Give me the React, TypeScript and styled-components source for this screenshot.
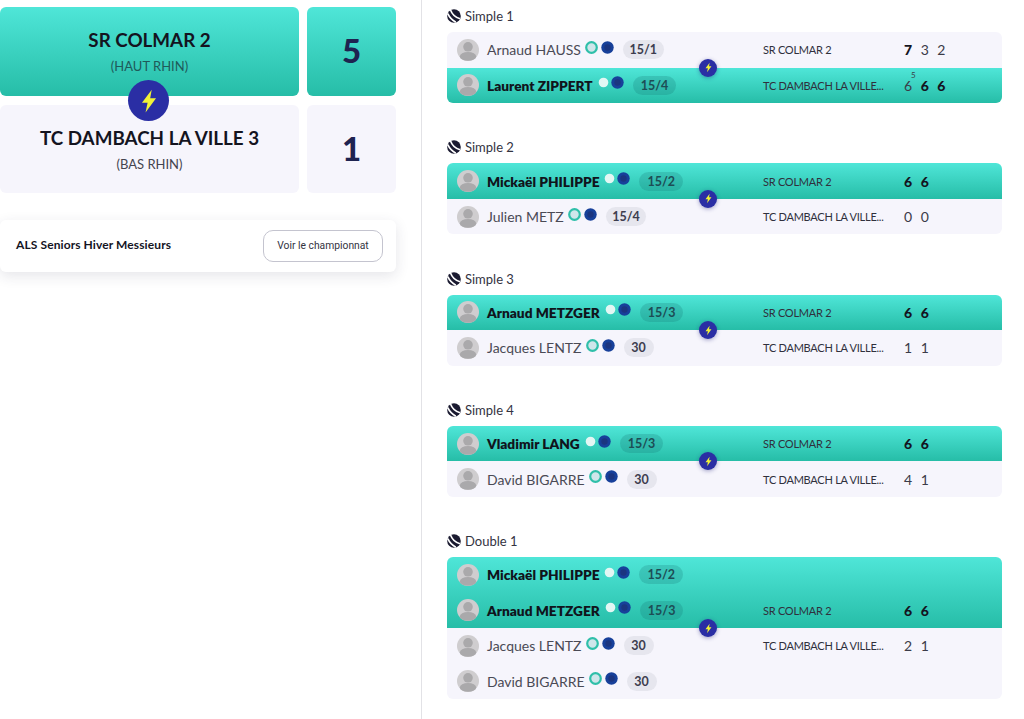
import React from "react";
import styled, { createGlobalStyle } from "styled-components";

const FONT = `Lato, "Open Sans", sans-serif`;
const TEAL = "linear-gradient(180deg, #4fe6d8 0%, #26bda7 100%)";
const LILAC = "#f6f5fc";

const GlobalStyle = createGlobalStyle`
  html, body { margin: 0; padding: 0; background: #fff; overflow: hidden; }
  body { font-family: ${FONT}; color: #1b1b2b; }
  * { box-sizing: border-box; }
`;

const Bolt = ({ size }: { size: number }) => (
  <svg width={size} height={size} viewBox="0 0 24 24">
    <path d="M14.5 1.5 5.5 13.5h5.2L8.8 22.5l9.700-13h-5.400z" fill="#f1f238" />
  </svg>
);

const BallIcon = () => (
  <svg width="14" height="14" viewBox="0 0 14 14">
    <circle cx="7" cy="7" r="6.800" fill="#1a1a30" />
    <path d="M3.400 0.800C4.800 4.600 8 8.400 13 9.800M0.800 4.600C2.400 8.200 5 11 8.800 13.200" fill="none" stroke="#fff" strokeWidth="1.700" />
  </svg>
);

const Avatar = () => (
  <svg width="22" height="22" viewBox="0 0 22 22">
    <circle cx="11" cy="11" r="11" fill="#cfcdcf" />
    <circle cx="11" cy="7.800" r="4.800" fill="#aaa9ab" />
    <ellipse cx="11" cy="17.400" rx="8.200" ry="4.400" fill="#aaa9ab" />
  </svg>
);

const GreenDot = ({ won }: { won: boolean }) => (
  <svg width="13" height="13" viewBox="0 0 13 13">
    {!won && <circle cx="6.500" cy="6.500" r="5.300" fill="#cfe6ea" stroke="#2fbfa9" strokeWidth="2.200" />}
    {won && <circle cx="6.500" cy="6.500" r="4.800" fill="#e3f7f4" />}
  </svg>
);

const BlueDot = () => (
  <svg width="13" height="13" viewBox="0 0 13 13">
    <circle cx="6.500" cy="6.500" r="6.200" fill="#17409a" />
    <circle cx="6.500" cy="6.500" r="3.200" fill="#1b3580" />
  </svg>
);

type Player = { name: string; rank: string };
type Side = { players: Player[]; team: string; sets: { v: number; bold?: boolean; tie?: number }[]; won: boolean };
type Match = { title: string; sides: Side[] };

const COLMAR = "SR COLMAR 2";
const DAMBACH = "TC DAMBACH LA VILLE...";

const s = (...vals: number[]) => vals.map((v) => ({ v }));
const b = (...vals: number[]) => vals.map((v) => ({ v, bold: true }));

const matches: Match[] = [
  {
    title: "Simple 1",
    sides: [
      { players: [{ name: "Arnaud HAUSS", rank: "15/1" }], team: COLMAR, won: false, sets: [{ v: 7, bold: true }, { v: 3 }, { v: 2 }] },
      { players: [{ name: "Laurent ZIPPERT", rank: "15/4" }], team: DAMBACH, won: true, sets: [{ v: 6, tie: 5 }, { v: 6, bold: true }, { v: 6, bold: true }] },
    ],
  },
  {
    title: "Simple 2",
    sides: [
      { players: [{ name: "Mickaël PHILIPPE", rank: "15/2" }], team: COLMAR, won: true, sets: b(6, 6) },
      { players: [{ name: "Julien METZ", rank: "15/4" }], team: DAMBACH, won: false, sets: s(0, 0) },
    ],
  },
  {
    title: "Simple 3",
    sides: [
      { players: [{ name: "Arnaud METZGER", rank: "15/3" }], team: COLMAR, won: true, sets: b(6, 6) },
      { players: [{ name: "Jacques LENTZ", rank: "30" }], team: DAMBACH, won: false, sets: s(1, 1) },
    ],
  },
  {
    title: "Simple 4",
    sides: [
      { players: [{ name: "Vladimir LANG", rank: "15/3" }], team: COLMAR, won: true, sets: b(6, 6) },
      { players: [{ name: "David BIGARRE", rank: "30" }], team: DAMBACH, won: false, sets: s(4, 1) },
    ],
  },
  {
    title: "Double 1",
    sides: [
      {
        players: [
          { name: "Mickaël PHILIPPE", rank: "15/2" },
          { name: "Arnaud METZGER", rank: "15/3" },
        ],
        team: COLMAR,
        won: true,
        sets: b(6, 6),
      },
      {
        players: [
          { name: "Jacques LENTZ", rank: "30" },
          { name: "David BIGARRE", rank: "30" },
        ],
        team: DAMBACH,
        won: false,
        sets: s(2, 1),
      },
    ],
  },
];

export default function App() {
  return (
    <S.Page>
      <GlobalStyle />
      <S.Left>
        <S.Board>
          <S.TeamCard $won>
            <S.TeamName>SR COLMAR 2</S.TeamName>
            <S.Region $won>(HAUT RHIN)</S.Region>
          </S.TeamCard>
          <S.ScoreCard $won>5</S.ScoreCard>
          <S.TeamCard>
            <S.TeamName>TC DAMBACH LA VILLE 3</S.TeamName>
            <S.Region>(BAS RHIN)</S.Region>
          </S.TeamCard>
          <S.ScoreCard>1</S.ScoreCard>
          <S.BigBadge>
            <Bolt size={26} />
          </S.BigBadge>
        </S.Board>
        <S.InfoCard>
          <S.League>ALS Seniors Hiver Messieurs</S.League>
          <S.Button>Voir le championnat</S.Button>
        </S.InfoCard>
      </S.Left>
      <S.Right>
        {matches.map((m) => (
          <section key={m.title}>
            <S.MatchTitle>
              <BallIcon />
              {m.title}
            </S.MatchTitle>
            <S.MatchBox>
              {m.sides.map((side, idx) => (
                <S.SideBlock key={side.team} $won={side.won}>
                  <S.Players>
                    {side.players.map((p) => (
                      <S.PlayerRow key={p.name}>
                        <Avatar />
                        <S.Name $won={side.won}>{p.name}</S.Name>
                        <S.Dots $won={side.won}>
                          <GreenDot won={side.won} />
                          <BlueDot />
                        </S.Dots>
                        <S.Rank $won={side.won}>{p.rank}</S.Rank>
                      </S.PlayerRow>
                    ))}
                  </S.Players>
                  <S.Team $edge={idx === 0 ? "end" : "start"}>{side.team}</S.Team>
                  <S.Sets $edge={idx === 0 ? "end" : "start"}>
                    {side.sets.map((set, i) => (
                      <S.Set key={i} $bold={set.bold}>
                        {set.v}
                        {set.tie !== undefined && <S.Tie>{set.tie}</S.Tie>}
                      </S.Set>
                    ))}
                  </S.Sets>
                </S.SideBlock>
              ))}
              <S.SmallBadge $top={m.sides[0].players.length * 35.5}>
                <Bolt size={11} />
              </S.SmallBadge>
            </S.MatchBox>
          </section>
        ))}
      </S.Right>
    </S.Page>
  );
}

const S = {
  Page: styled.div`
    display: flex;
    width: 1024px;
    height: 719px;
    overflow: hidden;
  `,
  Left: styled.div`
    width: 396px;
    margin-right: 25px;
    padding-top: 7px;
    flex: none;
  `,
  Board: styled.div`
    position: relative;
    display: grid;
    grid-template-columns: 299px 89px;
    grid-auto-rows: 88.5px;
    gap: 9px 8px;
  `,
  TeamCard: styled.div<{ $won?: boolean }>`
    display: flex;
    flex-direction: column;
    align-items: center;
    justify-content: center;
    gap: 6px;
    border-radius: 6px;
    padding-top: 1px;
    background: ${(p) => (p.$won ? TEAL : LILAC)};
  `,
  TeamName: styled.div`
    font-size: 18.800px;
    font-weight: 700;
    color: #14141f;
    line-height: 24px;
  `,
  Region: styled.div<{ $won?: boolean }>`
    font-size: 13px;
    line-height: 17px;
    color: ${(p) => (p.$won ? "#1f5a5a" : "#44444f")};
  `,
  ScoreCard: styled.div<{ $won?: boolean }>`
    display: flex;
    align-items: center;
    justify-content: center;
    border-radius: 6px;
    padding-bottom: 2px;
    font-size: 33px;
    font-weight: 900;
    color: #1e2350;
    background: ${(p) => (p.$won ? TEAL : LILAC)};
  `,
  BigBadge: styled.div`
    position: absolute;
    left: 128px;
    top: 73px;
    width: 41px;
    height: 41px;
    border-radius: 50%;
    background: #2a2ea4;
    display: flex;
    align-items: center;
    justify-content: center;
  `,
  InfoCard: styled.div`
    margin-top: 26.500px;
    height: 52px;
    display: flex;
    align-items: center;
    justify-content: space-between;
    padding: 0 13px 0 16px;
    border-radius: 6px;
    background: #fff;
    box-shadow: 0 4px 14px rgba(40, 40, 70, 0.12);
  `,
  League: styled.div`
    font-size: 12px;
    font-weight: 700;
    color: #14141f;
    letter-spacing: 0.1px;
    margin-top: -2px;
  `,
  Button: styled.div`
    width: 120px;
    height: 32px;
    display: flex;
    align-items: center;
    justify-content: center;
    border: 1px solid #c4c4cf;
    border-radius: 10px;
    font-family: Roboto, sans-serif;
    font-size: 10.300px;
    color: #33333f;
  `,
  Right: styled.div`
    flex: none;
    width: 603px;
    height: 719px;
    border-left: 1px solid #e2e2e6;
    padding: 8px 0 0 25px;
    display: flex;
    flex-direction: column;
    gap: 36.300px;
  `,
  MatchTitle: styled.div`
    height: 24px;
    padding-bottom: 8px;
    display: flex;
    align-items: center;
    gap: 4px;
    font-size: 13px;
    color: #33333f;
  `,
  MatchBox: styled.div`
    position: relative;
    width: 555px;
  `,
  SideBlock: styled.div<{ $won: boolean }>`
    display: grid;
    grid-template-columns: 316px 141px 1fr;
    background: ${(p) => (p.$won ? TEAL : LILAC)};
    &:first-child {
      border-radius: 6px 6px 0 0;
    }
    &:nth-child(2) {
      border-radius: 0 0 6px 6px;
    }
  `,
  Players: styled.div`
    display: flex;
    flex-direction: column;
  `,
  PlayerRow: styled.div`
    height: 35.500px;
    padding-left: 10px;
    display: flex;
    align-items: center;
  `,
  Name: styled.span<{ $won: boolean }>`
    margin-left: 8px;
    font-size: ${(p) => (p.$won ? "13.700px" : "14px")};
    font-weight: ${(p) => (p.$won ? 800 : 400)};
    color: ${(p) => (p.$won ? "#10141c" : "#4a4a55")};
  `,
  Dots: styled.span<{ $won: boolean }>`
    display: flex;
    gap: ${(p) => (p.$won ? "1px" : "3px")};
    margin: -5px 0 0 4px;
    svg {
      display: block;
    }
  `,
  Rank: styled.span<{ $won: boolean }>`
    margin-left: 9px;
    min-width: 30px;
    height: 19px;
    padding: 0 ${(p) => (p.$won ? "8px" : "6.500px")};
    border-radius: 10px;
    display: flex;
    align-items: center;
    justify-content: center;
    font-size: 12.500px;
    font-weight: 700;
    color: ${(p) => (p.$won ? "#1d4d55" : "#3d3d4e")};
    background: ${(p) => (p.$won ? "rgba(20, 110, 110, 0.22)" : "#e6e6ee")};
  `,
  Team: styled.div<{ $edge: string }>`
    align-self: ${(p) => p.$edge};
    height: 35.500px;
    display: flex;
    align-items: center;
    font-size: 11px;
    letter-spacing: -0.25px;
    color: #30303c;
    white-space: nowrap;
  `,
  Sets: styled.div<{ $edge: string }>`
    align-self: ${(p) => p.$edge};
    height: 35.500px;
    display: flex;
    align-items: center;
    gap: 8.500px;
    font-size: 14px;
  `,
  Set: styled.span<{ $bold?: boolean }>`
    position: relative;
    font-weight: ${(p) => (p.$bold ? 900 : 400)};
    color: ${(p) => (p.$bold ? "#14141f" : "#3b3b48")};
  `,
  Tie: styled.span`
    position: absolute;
    left: 7px;
    top: -7px;
    font-size: 8px;
    font-weight: 400;
  `,
  SmallBadge: styled.div<{ $top: number }>`
    position: absolute;
    left: 252px;
    top: ${(p) => p.$top - 9}px;
    width: 18px;
    height: 18px;
    border-radius: 50%;
    background: #2a2ea4;
    box-shadow: 0 1px 4px rgba(30, 30, 120, 0.4);
    display: flex;
    align-items: center;
    justify-content: center;
  `,
};
